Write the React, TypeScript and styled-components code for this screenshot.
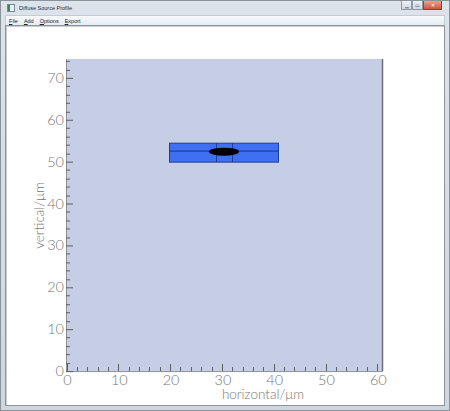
import React from "react";
import styled, { createGlobalStyle } from "styled-components";

const Global = createGlobalStyle`
  html, body { margin: 0; padding: 0; background: #fff; }
  body { width: 450px; height: 411px; overflow: hidden; }
`;

const Window = styled.div`
  width: 450px;
  height: 411px;
  box-sizing: border-box;
  display: flex;
  flex-direction: column;
  background: linear-gradient(#dde3ea, #cfd6df);
  border: 1px solid #8a929c;
  padding: 0 4px 4px 4px;
  font-family: "Liberation Sans", Arial, sans-serif;
`;

const TitleBar = styled.div`
  height: 14px;
  display: flex;
  align-items: center;
  gap: 4px;
  padding-left: 2px;
`;

const AppIcon = styled.div`
  width: 6px;
  height: 6px;
  border: 1px solid #7a8896;
  background: linear-gradient(90deg, #3a8a4c 0 40%, #e8eef4 40%);
`;

const Title = styled.span`
  font-size: 5.5px;
  color: #1e2a36;
  flex: 1;
`;

const Controls = styled.div`
  display: flex;
  align-self: flex-start;
  margin-right: 3px;
`;

const CtlBtn = styled.div<{ $close?: boolean; $w: number }>`
  width: ${(p) => p.$w}px;
  height: 9px;
  box-sizing: border-box;
  border: 1px solid ${(p) => (p.$close ? "#9c3e2e" : "#8f9aa8")};
  border-top: none;
  background: ${(p) =>
    p.$close ? "linear-gradient(#e9a491, #cf5540)" : "linear-gradient(#eef2f6, #cfd7e1)"};
  display: flex;
  align-items: center;
  justify-content: center;
  color: ${(p) => (p.$close ? "#fff" : "#555")};
  font-size: 5px;
  line-height: 1;
`;

const MenuBar = styled.div`
  height: 9px;
  display: flex;
  align-items: center;
  gap: 6px;
  padding-left: 3px;
  background: linear-gradient(#f8fafc, #e6ecf3);
  border: 1px solid #c2cbd6;
  border-bottom: none;
`;

const MenuItem = styled.span`
  font-size: 5.5px;
  color: #222;
  white-space: nowrap;
  span { text-decoration: underline; }
`;

const Client = styled.div`
  flex: 1;
  background: #fff;
  border: 1px solid #8d949c;
  box-shadow: inset 1px 1px 0 #c8ccd0;
  overflow: hidden;
`;

const Chart = styled.svg`
  display: block;
  width: 100%;
  height: 100%;
`;

const X0 = 66.5;
const XS = 5.18;
const Y0 = 371;
const YS = 4.2;
const xv = (v: number) => X0 + v * XS;
const yv = (v: number) => Y0 - v * YS;

const labelFont = `Lato, "DejaVu Sans", sans-serif`;

function Plot() {
  const xt: React.ReactNode[] = [];
  for (let v = 0; v <= 60; v += 2) {
    const major = v % 10 === 0;
    const x = Math.round(xv(v)) + 0.5;
    xt.push(
      <line key={"x" + v} x1={x} x2={x} y1={Y0} y2={Y0 - (major ? 7 : 4)} stroke="#5a5e66" strokeWidth={1} />
    );
    if (major)
      xt.push(
        <text key={"xl" + v} x={xv(v) + 1} y={384.5} fontSize={14.5} fontWeight={300} fill="#777" textAnchor="middle" fontFamily={labelFont}>
          {v}
        </text>
      );
  }
  const yt: React.ReactNode[] = [];
  for (let v = 0; v <= 74; v += 2) {
    const major = v % 10 === 0;
    const y = Math.round(yv(v)) + 0.5;
    yt.push(
      <line key={"y" + v} x1={66} x2={66 + (major ? 7 : 4)} y1={y} y2={y} stroke="#5a5e66" strokeWidth={1} />
    );
    if (major)
      yt.push(
        <text key={"yl" + v} x={64} y={yv(v) + 5} fontSize={14.5} fontWeight={300} fill="#777" textAnchor="end" fontFamily={labelFont}>
          {v}
        </text>
      );
  }
  return (
    <Chart viewBox="6 25 438 380" preserveAspectRatio="none">
      <rect x={66} y={58} width={316} height={313} fill="#c6cee6" />
      <line x1={382.5} x2={382.5} y1={58} y2={371} stroke="#6b7079" strokeWidth={1.5} />
      <line x1={66} x2={383} y1={371.5} y2={371.5} stroke="#8a8f98" strokeWidth={1} />
      <line x1={66.5} x2={66.5} y1={58} y2={372} stroke="#8a8f98" strokeWidth={1} />
      {xt}
      {yt}
      <rect x={169.5} y={142.5} width={109} height={19} fill="#3f6ff2" stroke="#223f8e" strokeWidth={1} />
      <line x1={169.5} x2={278.5} y1={150.5} y2={150.5} stroke="#223f8e" strokeWidth={1.2} />
      <line x1={216.5} x2={216.5} y1={142.5} y2={161.5} stroke="#223f8e" strokeWidth={1} />
      <line x1={232.5} x2={232.5} y1={142.5} y2={161.5} stroke="#223f8e" strokeWidth={1} />
      <ellipse cx={224} cy={151} rx={15} ry={4} fill="#000" />
      <text x={263} y={399} fontSize={13.5} fontWeight={300} fill="#777" textAnchor="middle" fontFamily={labelFont}>
        horizontal/μm
      </text>
      <text
        x={0}
        y={0}
        fontSize={13.5}
        fontWeight={300}
        fill="#777"
        textAnchor="middle"
        fontFamily={labelFont}
        transform="translate(44 215) rotate(-90)"
      >
        vertical/μm
      </text>
    </Chart>
  );
}

export default function App() {
  return (
    <>
      <Global />
      <Window>
        <TitleBar>
          <AppIcon />
          <Title>Diffuse Source Profile</Title>
          <Controls>
            <CtlBtn $w={11}>▁</CtlBtn>
            <CtlBtn $w={11}>▭</CtlBtn>
            <CtlBtn $w={19} $close>✕</CtlBtn>
          </Controls>
        </TitleBar>
        <MenuBar>
          <MenuItem><span>F</span>ile</MenuItem>
          <MenuItem><span>A</span>dd</MenuItem>
          <MenuItem><span>O</span>ptions</MenuItem>
          <MenuItem><span>E</span>xport</MenuItem>
        </MenuBar>
        <Client>
          <Plot />
        </Client>
      </Window>
    </>
  );
}
